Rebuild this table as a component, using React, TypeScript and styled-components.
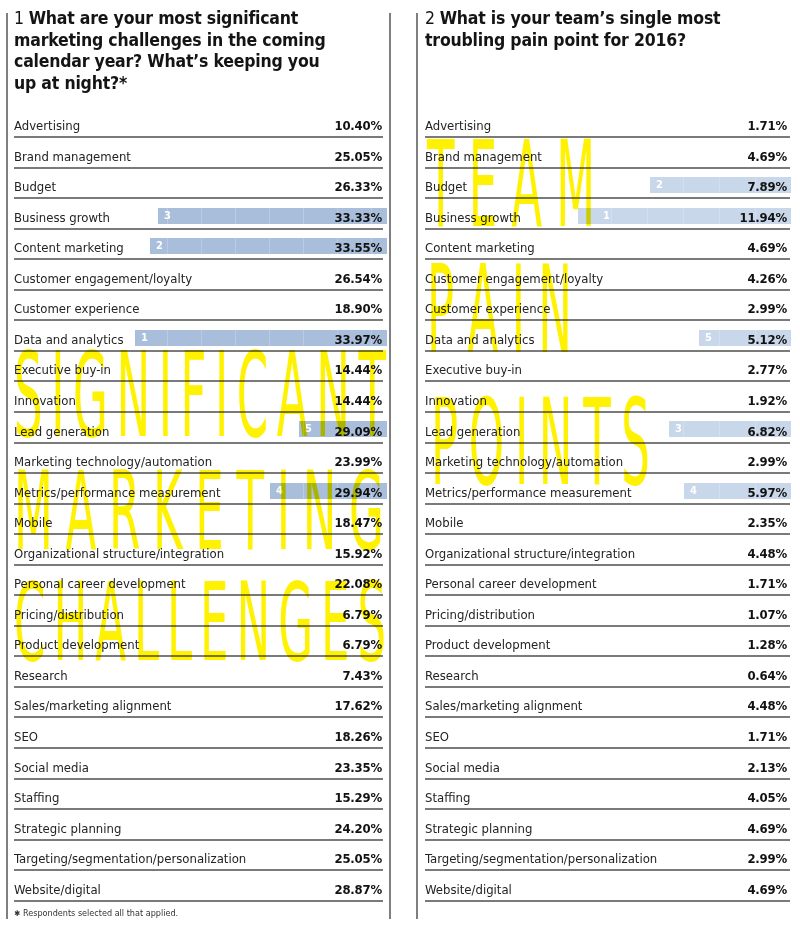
import React from "react";
import styled, { createGlobalStyle } from "styled-components";

const NARROW = `"DejaVu Sans Condensed", "DejaVu Sans", "Liberation Sans", sans-serif`;

const GlobalStyle = createGlobalStyle`
  html, body {
    margin: 0;
    padding: 0;
    background: #fff;
  }
  body {
    font-family: ${NARROW};
    font-stretch: condensed;
    color: #222;
  }
`;

type Item = {
  label: string;
  value: string;
  rank?: number;
  bar?: number;
  numAt?: number;
};

type Letters = {
  text: string;
  top: number;
  left: number;
  width: number;
  height: number;
};

const challenges: Item[] = [
  { label: "Advertising", value: "10.40%" },
  { label: "Brand management", value: "25.05%" },
  { label: "Budget", value: "26.33%" },
  { label: "Business growth", value: "33.33%", rank: 3, bar: 229 },
  { label: "Content marketing", value: "33.55%", rank: 2, bar: 237 },
  { label: "Customer engagement/loyalty", value: "26.54%" },
  { label: "Customer experience", value: "18.90%" },
  { label: "Data and analytics", value: "33.97%", rank: 1, bar: 252 },
  { label: "Executive buy-in", value: "14.44%" },
  { label: "Innovation", value: "14.44%" },
  { label: "Lead generation", value: "29.09%", rank: 5, bar: 88 },
  { label: "Marketing technology/automation", value: "23.99%" },
  { label: "Metrics/performance measurement", value: "29.94%", rank: 4, bar: 117 },
  { label: "Mobile", value: "18.47%" },
  { label: "Organizational structure/integration", value: "15.92%" },
  { label: "Personal career development", value: "22.08%" },
  { label: "Pricing/distribution", value: "6.79%" },
  { label: "Product development", value: "6.79%" },
  { label: "Research", value: "7.43%" },
  { label: "Sales/marketing alignment", value: "17.62%" },
  { label: "SEO", value: "18.26%" },
  { label: "Social media", value: "23.35%" },
  { label: "Staffing", value: "15.29%" },
  { label: "Strategic planning", value: "24.20%" },
  { label: "Targeting/segmentation/personalization", value: "25.05%" },
  { label: "Website/digital", value: "28.87%" },
];

const painPoints: Item[] = [
  { label: "Advertising", value: "1.71%" },
  { label: "Brand management", value: "4.69%" },
  { label: "Budget", value: "7.89%", rank: 2, bar: 141 },
  { label: "Business growth", value: "11.94%", rank: 1, bar: 213, numAt: 25 },
  { label: "Content marketing", value: "4.69%" },
  { label: "Customer engagement/loyalty", value: "4.26%" },
  { label: "Customer experience", value: "2.99%" },
  { label: "Data and analytics", value: "5.12%", rank: 5, bar: 92 },
  { label: "Executive buy-in", value: "2.77%" },
  { label: "Innovation", value: "1.92%" },
  { label: "Lead generation", value: "6.82%", rank: 3, bar: 122 },
  { label: "Marketing technology/automation", value: "2.99%" },
  { label: "Metrics/performance measurement", value: "5.97%", rank: 4, bar: 107 },
  { label: "Mobile", value: "2.35%" },
  { label: "Organizational structure/integration", value: "4.48%" },
  { label: "Personal career development", value: "1.71%" },
  { label: "Pricing/distribution", value: "1.07%" },
  { label: "Product development", value: "1.28%" },
  { label: "Research", value: "0.64%" },
  { label: "Sales/marketing alignment", value: "4.48%" },
  { label: "SEO", value: "1.71%" },
  { label: "Social media", value: "2.13%" },
  { label: "Staffing", value: "4.05%" },
  { label: "Strategic planning", value: "4.69%" },
  { label: "Targeting/segmentation/personalization", value: "2.99%" },
  { label: "Website/digital", value: "4.69%" },
];

// big yellow words laid over each table, positions relative to the panel
const leftWords: Letters[] = [
  { text: "SIGNIFICANT", top: 340, left: 6, width: 372, height: 86 },
  { text: "MARKETING", top: 460, left: 6, width: 370, height: 79 },
  { text: "CHALLENGES", top: 571, left: 6, width: 372, height: 79 },
];

const rightWords: Letters[] = [
  { text: "TEAM", top: 129, left: 9, width: 168, height: 87 },
  { text: "PAIN", top: 254, left: 9, width: 145, height: 88 },
  { text: "POINTS", top: 387, left: 13, width: 219, height: 87 },
];

const Page = styled.div`
  display: flex;
  align-items: stretch;
  gap: 25px;
  padding: 13px 0 0 6px;
`;

const Panel = styled.section<{ $edge?: boolean; $width: number; $padRight: number; $padLeft: number }>`
  position: relative;
  display: flex;
  flex-direction: column;
  flex: none;
  width: ${(p) => p.$width}px;
  border-left: 2px solid #7f7f7f;
  border-right: ${(p) => (p.$edge ? "2px solid #7f7f7f" : "none")};
  padding: 0 ${(p) => p.$padRight}px 0 ${(p) => p.$padLeft}px;
`;

const Title = styled.h2`
  margin: -5px 0 0;
  height: 99.5px;
  font-family: ${NARROW};
  font-weight: 700;
  font-size: 17.5px;
  line-height: 21.7px;
  letter-spacing: -0.2px;
  color: #141414;
  white-space: nowrap;

  span {
    font-weight: 400;
  }
`;

const Row = styled.div`
  position: relative;
  box-sizing: border-box;
  height: 30.56px;
  border-bottom: 2px solid #7a7a7a;
  display: flex;
  align-items: flex-end;
  justify-content: space-between;
  padding-bottom: 2px;
`;

const Label = styled.span`
  position: relative;
  z-index: 1;
  font-size: 13px;
  line-height: 16px;
  color: #232323;
  white-space: nowrap;
`;

const Value = styled.span<{ $inset: number }>`
  position: relative;
  z-index: 1;
  font-size: 13px;
  line-height: 16px;
  font-weight: 700;
  letter-spacing: -0.2px;
  color: #111;
  padding-right: ${(p) => p.$inset}px;
`;

const Bar = styled.div<{ $tone: string; $grid: number; $gridShift: number; $over: number }>`
  position: absolute;
  z-index: 0;
  box-sizing: border-box;
  top: 8.5px;
  right: ${(p) => -p.$over}px;
  height: 16px;
  display: flex;
  align-items: center;
  background-color: ${(p) => p.$tone};
  background-image: linear-gradient(to right, rgba(255, 255, 255, 0.2) 1px, transparent 1px);
  background-size: ${(p) => p.$grid}px 100%;
  background-position: right ${(p) => p.$gridShift}px top;
  background-repeat: repeat-x;
`;

const Rank = styled.span`
  font-size: 11px;
  font-weight: 700;
  line-height: 16px;
  color: #fff;
`;

const Footnote = styled.p`
  margin: 6px 0 0;
  font-size: 9px;
  line-height: 10px;
  color: #333;

  b {
    font-family: "DejaVu Sans", sans-serif;
    font-size: 8px;
    margin-right: 3px;
  }
`;

const Overlay = styled.div`
  position: absolute;
  inset: 0;
  pointer-events: none;
  mix-blend-mode: multiply;
  z-index: 3;
`;

const Word = styled.div<{ $top: number; $left: number; $width: number; $height: number }>`
  position: absolute;
  top: ${(p) => p.$top}px;
  left: ${(p) => p.$left}px;
  width: ${(p) => p.$width}px;
  height: ${(p) => p.$height}px;
  display: flex;
  justify-content: space-between;
`;

const Glyph = styled.span<{ $scale: number }>`
  display: block;
  font-family: "DejaVu Sans Condensed", "DejaVu Sans", sans-serif;
  font-stretch: condensed;
  font-weight: 400;
  font-size: 50px;
  line-height: 36px;
  height: 36px;
  color: #fff200;
  transform: scaleY(${(p) => p.$scale});
  transform-origin: 50% 0;
`;

type SurveyProps = {
  num: string;
  lines: string[];
  items: Item[];
  words: Letters[];
  tone: string;
  grid: number;
  gridShift: number;
  over: number;
  inset: number;
};

function Survey({ num, lines, items, words, tone, grid, gridShift, over, inset }: SurveyProps) {
  return (
    <>
      <Title>
        <span>{num} </span>
        {lines.map((line, i) => (
          <React.Fragment key={i}>
            {i > 0 ? <br /> : null}
            {line}
          </React.Fragment>
        ))}
      </Title>
      {items.map((item) => (
        <Row key={item.label}>
          <Label>{item.label}</Label>
          {item.bar ? (
            <Bar
              $tone={tone}
              $grid={grid}
              $gridShift={gridShift}
              $over={over}
              style={{ width: item.bar, paddingLeft: item.numAt ?? 6 }}
            >
              <Rank>{item.rank}</Rank>
            </Bar>
          ) : null}
          <Value $inset={inset}>{item.value}</Value>
        </Row>
      ))}
      <Overlay>
        {words.map((w) => (
          <Word key={w.text} $top={w.top} $left={w.left} $width={w.width} $height={w.height}>
            {w.text.split("").map((ch, i) => (
              <Glyph key={i} $scale={w.height / 36.4}>
                {ch}
              </Glyph>
            ))}
          </Word>
        ))}
      </Overlay>
    </>
  );
}

export default function App() {
  return (
    <>
      <GlobalStyle />
      <Page>
        <Panel $edge $width={369} $padLeft={6} $padRight={6}>
          <Survey
            num="1"
            lines={[
              "What are your most significant",
              "marketing challenges in the coming",
              "calendar year? What’s keeping you",
              "up at night?*",
            ]}
            items={challenges}
            words={leftWords}
            tone="#a9bedb"
            grid={34}
            gridShift={16}
            over={4}
            inset={1}
          />
          <Footnote>
            <b>✱</b>Respondents selected all that applied.
          </Footnote>
        </Panel>
        <Panel $width={365} $padLeft={7} $padRight={10}>
          <Survey
            num="2"
            lines={["What is your team’s single most", "troubling pain point for 2016?"]}
            items={painPoints}
            words={rightWords}
            tone="#c9d7ea"
            grid={36}
            gridShift={0}
            over={1}
            inset={3}
          />
        </Panel>
      </Page>
    </>
  );
}
